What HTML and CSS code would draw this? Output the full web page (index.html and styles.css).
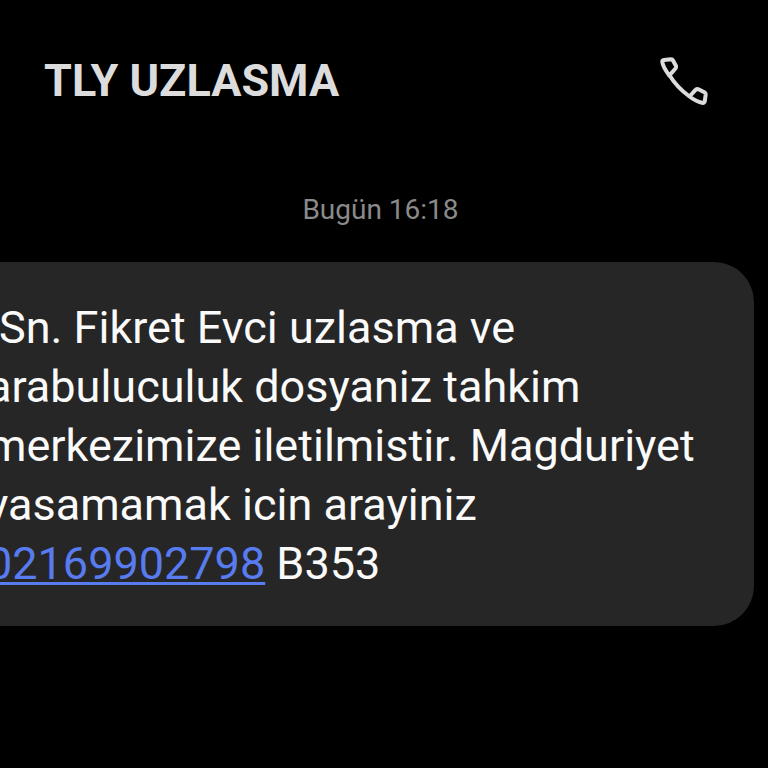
FILE: index.html
```html
<!DOCTYPE html>
<html lang="tr">
<head>
<meta charset="utf-8">
<meta name="viewport" content="width=device-width, initial-scale=1">
<title>TLY UZLASMA</title>
<link rel="stylesheet" href="styles.css">
</head>
<body>
<header class="header">
  <h1 class="sender">TLY UZLASMA</h1>
  <button class="call" type="button" aria-label="Ara">
    <svg class="call-icon" viewBox="0 0 52 52" aria-hidden="true">
      <path d="M6 5L13 4.300Q14.500 4.300 15 5.500L18 11Q18.300 12.500 17.500 13.500L11.300 20.500Q5 12 4.300 7Q4.200 5.300 6 5Z"/>
      <path d="M11 19.500Q19 32.500 31.500 41.500"/>
      <path d="M31.500 41.500L37.500 34.800Q39 33.800 40.500 34.300L46.800 37.500Q47.800 38.300 47.700 39.500L46.800 46Q46.300 48.200 44 47.800Q38 46.500 31.500 41.500Z"/>
    </svg>
  </button>
</header>
<main class="thread">
  <time class="stamp">Bugün 16:18</time>
  <p class="bubble">Sn. Fikret Evci uzlasma ve<br>arabuluculuk dosyaniz tahkim<br>merkezimize iletilmistir. Magduriyet<br>yasamamak icin arayiniz<br><a class="phone" href="tel:02169902798">02169902798</a> B353</p>
</main>
</body>
</html>
```

FILE: styles.css
```css
* { box-sizing: border-box; }
body {
  margin: 0;
  background: #000;
  color: #fafafa;
  font-family: Roboto, "Liberation Sans", sans-serif;
  overflow-x: hidden;
}
.header {
  display: flex;
  align-items: center;
  justify-content: space-between;
  padding: 53px 58px 0 44px;
}
.sender {
  margin: 0;
  color: #dcdcdc;
  font-size: 45px;
  font-weight: 700;
  line-height: 56px;
}
.call {
  padding: 0;
  border: 0;
  background: none;
}
.call-icon {
  display: block;
  width: 52px;
  height: 52px;
  fill: none;
  stroke: #dcdcdc;
  stroke-width: 4;
  stroke-linejoin: round;
}
.thread {
  display: flex;
  flex-direction: column;
  padding: 83px 7px 0 0;
}
.stamp {
  align-self: center;
  color: #8a8a8a;
  font-size: 28px;
  line-height: 36px;
}
.bubble {
  margin: 34px 7px 0 -48px;
  padding: 36px 48px 33px 35px;
  border-radius: 40px;
  background: #262626;
  font-size: 45px;
  line-height: 59px;
  text-indent: 12px;
  white-space: nowrap;
}
.phone {
  color: #587cf0;
  text-decoration-thickness: 3px;
  text-underline-offset: 3px;
}
```
